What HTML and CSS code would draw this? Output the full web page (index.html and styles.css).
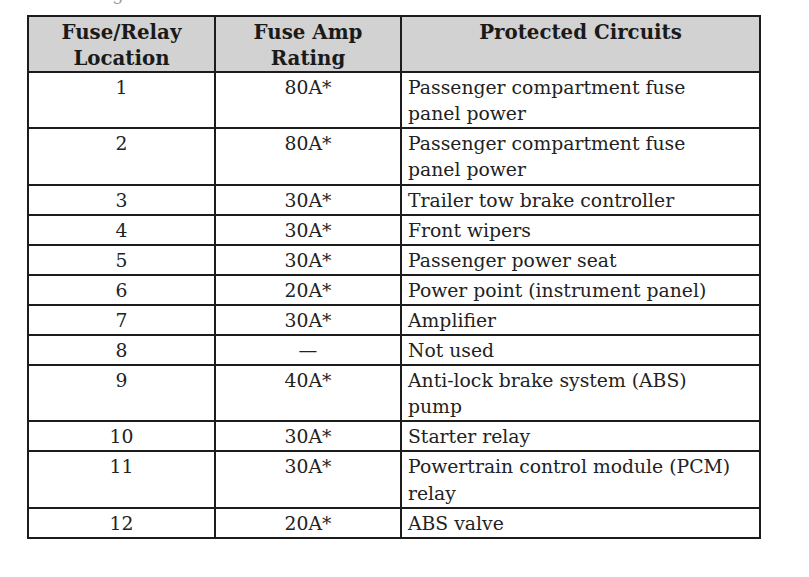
FILE: index.html
```html
<!DOCTYPE html>
<html>
<head>
<meta charset="utf-8">
<link rel="stylesheet" href="styles.css">
</head>
<body>
<p class="intro">The high-current fuses are coded as follows.</p>
<table class="fuses">
  <colgroup>
    <col class="c1"><col class="c2"><col class="c3">
  </colgroup>
  <thead>
    <tr><th>Fuse/Relay<br>Location</th><th>Fuse Amp<br>Rating</th><th>Protected Circuits</th></tr>
  </thead>
  <tbody>
    <tr><td class="num">1</td><td class="num">80A*</td><td class="desc">Passenger compartment fuse<br>panel power</td></tr>
    <tr><td class="num">2</td><td class="num">80A*</td><td class="desc">Passenger compartment fuse<br>panel power</td></tr>
    <tr><td class="num">3</td><td class="num">30A*</td><td class="desc">Trailer tow brake controller</td></tr>
    <tr><td class="num">4</td><td class="num">30A*</td><td class="desc">Front wipers</td></tr>
    <tr><td class="num">5</td><td class="num">30A*</td><td class="desc">Passenger power seat</td></tr>
    <tr><td class="num">6</td><td class="num">20A*</td><td class="desc">Power point (instrument panel)</td></tr>
    <tr><td class="num">7</td><td class="num">30A*</td><td class="desc">Amplifier</td></tr>
    <tr><td class="num">8</td><td class="num">—</td><td class="desc">Not used</td></tr>
    <tr><td class="num">9</td><td class="num">40A*</td><td class="desc">Anti-lock brake system (ABS)<br>pump</td></tr>
    <tr><td class="num">10</td><td class="num">30A*</td><td class="desc">Starter relay</td></tr>
    <tr><td class="num">11</td><td class="num">30A*</td><td class="desc">Powertrain control module (PCM)<br>relay</td></tr>
    <tr><td class="num">12</td><td class="num">20A*</td><td class="desc">ABS valve</td></tr>
  </tbody>
</table>
</body>
</html>
```
FILE: styles.css
```css
html, body {
  margin: 0;
  padding: 0;
  background: #ffffff;
}
body {
  font-family: "DejaVu Serif", "Liberation Serif", serif;
  color: #222222;
}
.intro {
  margin: -16px 0 0 55px;
  height: 20px;
  font-size: 18px;
  line-height: 20px;
  color: #9a9a9a;
  white-space: nowrap;
}
.fuses {
  margin: 11px 0 0 27px;
  border-collapse: collapse;
  width: 732px;
  table-layout: fixed;
  font-size: 18.8px;
  line-height: 26.1px;
}
.c1 { width: 187px; }
.c2 { width: 186px; }
.c3 { width: 359px; }
.fuses th, .fuses td {
  border: 2px solid #1c1c1c;
  padding: 2px 6px 0;
  vertical-align: top;
}
.fuses th {
  background: #d2d2d2;
  font-weight: bold;
  font-size: 19.8px;
  text-align: center;
  color: #1a1a1a;
}
.fuses td.num {
  text-align: center;
}
.fuses td.desc {
  text-align: left;
}
```
